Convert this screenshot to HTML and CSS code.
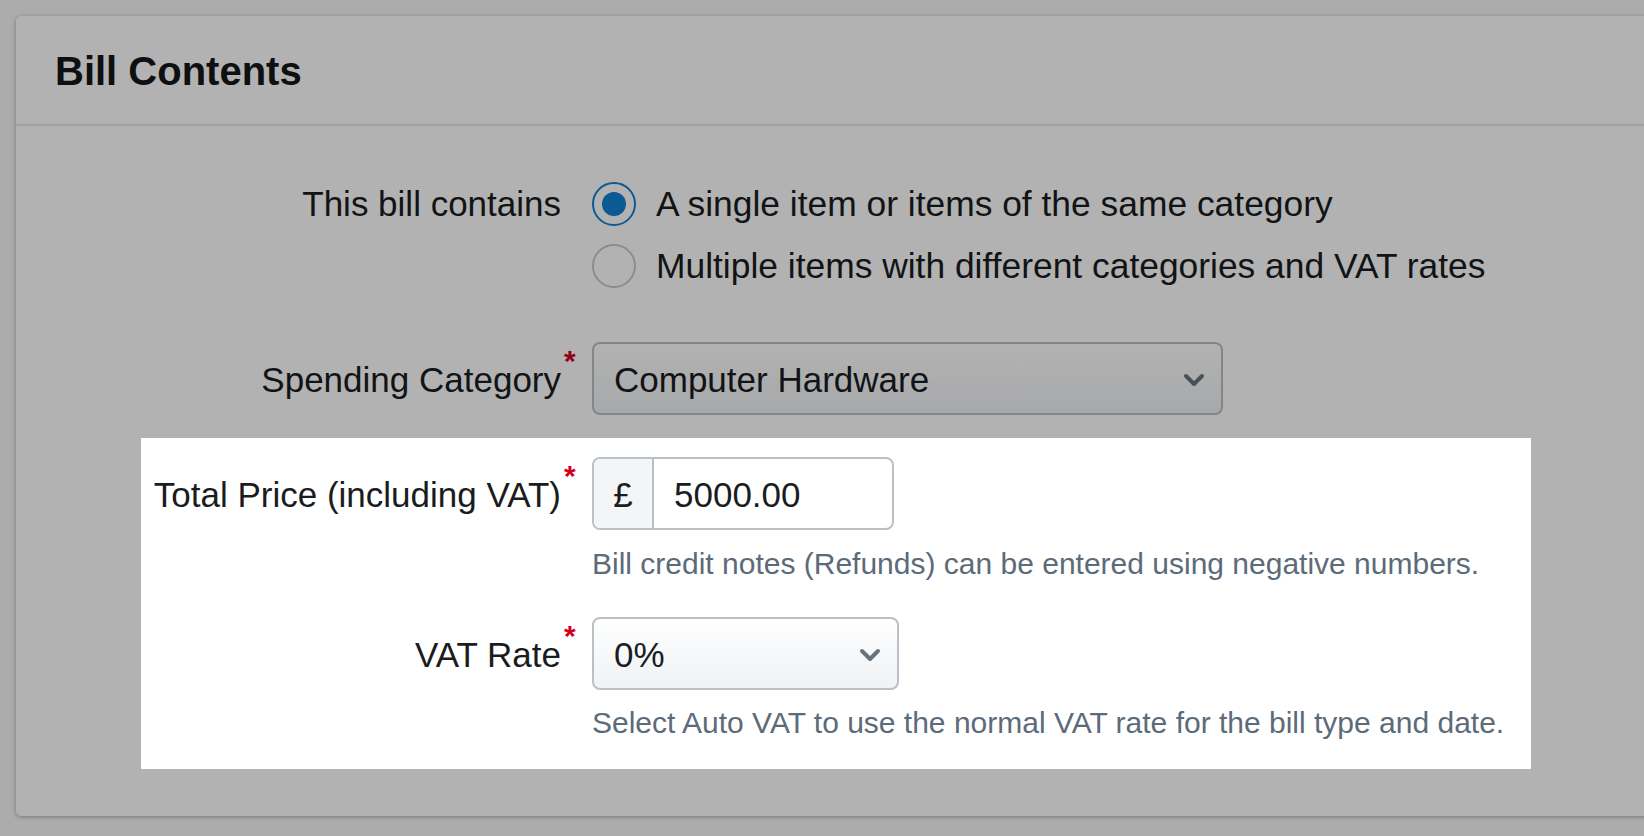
FILE: index.html
```html
<!DOCTYPE html>
<html lang="en">
<head>
<meta charset="utf-8">
<title>Bill Contents</title>
<link rel="stylesheet" href="styles.css">
</head>
<body>
<div class="card">
  <div class="card-header">
    <h2 class="card-title">Bill Contents</h2>
  </div>
  <div class="card-body">
    <div class="form">
      <div class="field">
        <div class="label label-plain">This bill contains</div>
        <div class="options">
          <div class="option"><span class="radio checked"></span><span>A single item or items of the same category</span></div>
          <div class="option"><span class="radio"></span><span>Multiple items with different categories and VAT rates</span></div>
        </div>
      </div>

      <div class="field field-select">
        <div class="label">Spending Category<span class="req">*</span></div>
        <div class="select select-wide">
          <span>Computer Hardware</span>
          <svg class="chev" viewBox="0 0 22 14" aria-hidden="true"><path d="M3 3l8 8 8-8" fill="none" stroke="#66747f" stroke-width="4" stroke-linecap="round" stroke-linejoin="round"/></svg>
        </div>
      </div>

      <div class="spotlight">
        <div class="field">
          <div class="label">Total Price (including VAT)<span class="req">*</span></div>
          <div class="input-group">
            <span class="prefix">£</span>
            <span class="input-value">5000.00</span>
          </div>
          <p class="help">Bill credit notes (Refunds) can be entered using negative numbers.</p>
        </div>

        <div class="field field-vat">
          <div class="label">VAT Rate<span class="req">*</span></div>
          <div class="select select-narrow">
            <span>0%</span>
            <svg class="chev" viewBox="0 0 22 14" aria-hidden="true"><path d="M3 3l8 8 8-8" fill="none" stroke="#66747f" stroke-width="4" stroke-linecap="round" stroke-linejoin="round"/></svg>
          </div>
          <p class="help help-vat">Select Auto VAT to use the normal VAT rate for the bill type and date.</p>
        </div>
      </div>
    </div>
  </div>
</div>
</body>
</html>
```

FILE: styles.css
```css
* {
  box-sizing: border-box;
}

html,
body {
  margin: 0;
  height: 100%;
}

body {
  background: #f6f6f6;
  font-family: "Liberation Sans", Arial, Helvetica, sans-serif;
  color: #1a1c1e;
  overflow: hidden;
}

.card {
  margin: 16px -20px 0 16px;
  height: 800px;
  background: #ffffff;
  border-radius: 5px 0 0 5px;
  box-shadow: 0 1px 4px rgba(0, 0, 0, 0.3);
}

.card-header {
  height: 110px;
  border-bottom: 2px solid #e3e8ed;
  padding: 33px 39px 0;
}

.card-title {
  margin: 0;
  font-size: 40px;
  line-height: 45px;
  font-weight: 700;
  color: #141618;
}

.card-body {
  padding: 56px 0 47px;
}

.form {
  margin-left: 125px;
  width: 1390px;
}

.field {
  display: grid;
  grid-template-columns: 420px auto;
  column-gap: 31px;
  justify-content: start;
  align-items: start;
}

.label {
  text-align: right;
  font-size: 35px;
  line-height: 44px;
  padding-top: 15.5px;
  white-space: nowrap;
}

.label-plain {
  padding-top: 0;
}

.req {
  display: inline-block;
  width: 0;
  margin-left: 3px;
  margin-right: -3px;
  position: relative;
  top: -21px;
  font-size: 30px;
  line-height: 1;
  font-weight: 700;
  color: #d0021b;
  white-space: nowrap;
}

.options {
  display: flex;
  flex-direction: column;
  gap: 18px;
}

.option {
  display: flex;
  align-items: center;
  gap: 20px;
  font-size: 35.4px;
  line-height: 44px;
  white-space: nowrap;
}

.radio {
  flex: none;
  width: 44px;
  height: 44px;
  border-radius: 50%;
  border: 2px solid #c3cad1;
  background: #ffffff;
}

.radio.checked {
  border-color: #1081d3;
  display: flex;
  align-items: center;
  justify-content: center;
}

.radio.checked::after {
  content: "";
  width: 24px;
  height: 24px;
  border-radius: 50%;
  background: #1081d3;
}

.field-select {
  margin-top: 54px;
}

.select {
  height: 73px;
  border: 2px solid #b9c1c8;
  border-radius: 8px;
  background: linear-gradient(#ffffff, #f0f2f5);
  display: flex;
  align-items: center;
  justify-content: space-between;
  padding: 2px 16px 0 20px;
  font-size: 35px;
  line-height: 44px;
  white-space: nowrap;
}

.select-wide {
  width: 631px;
}

.select-narrow {
  width: 307px;
}

.chev {
  width: 22px;
  height: 14px;
  flex: none;
}

.spotlight {
  margin-top: 23px;
  padding: 19px 0 27px;
  background: #ffffff;
  position: relative;
  z-index: 1;
  box-shadow: 0 0 0 3000px rgba(0, 0, 0, 0.3);
}

.input-group {
  display: flex;
  width: 302px;
  height: 73px;
  border: 2px solid #b9c1c8;
  border-radius: 8px;
  overflow: hidden;
  font-size: 35px;
  line-height: 44px;
  background: #ffffff;
}

.prefix {
  width: 60px;
  flex: none;
  background: #f3f5f7;
  border-right: 2px solid #b9c1c8;
  display: flex;
  align-items: center;
  justify-content: center;
  padding-top: 2px;
}

.input-value {
  display: flex;
  align-items: center;
  padding: 2px 0 0 20px;
}

.help {
  grid-column: 2;
  margin: 15px 0 0;
  font-size: 30px;
  line-height: 38px;
  color: #5b6b79;
  white-space: nowrap;
}

.help-vat {
  margin-top: 14px;
}

.field-vat {
  margin-top: 34px;
}
```
